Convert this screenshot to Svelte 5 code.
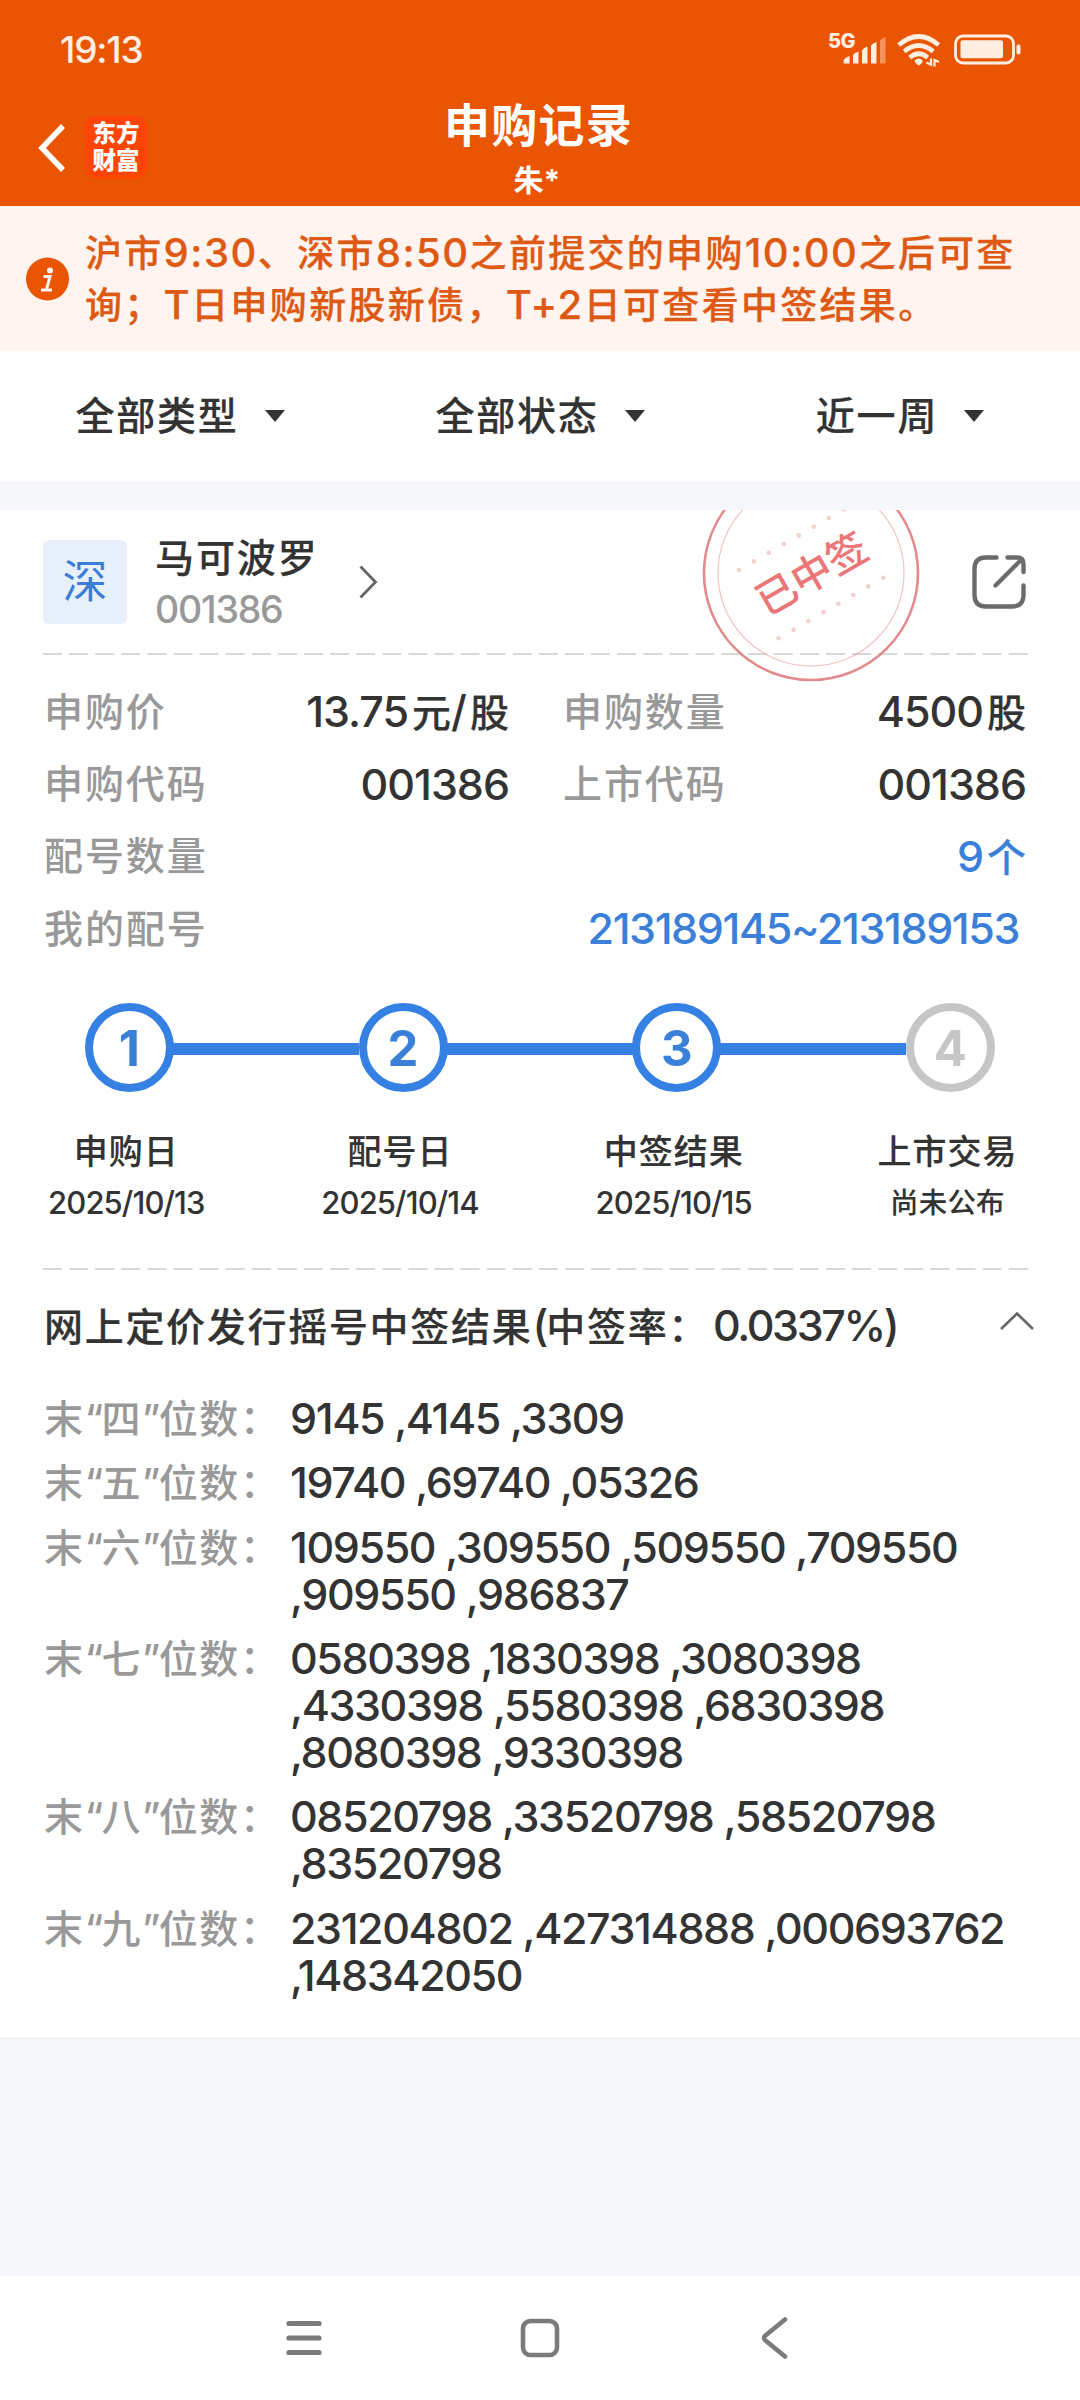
<script>
  const filters = ['全部类型', '全部状态', '近一周'];

  const details = [
    { label: '申购价', value: '13.75元/股' },
    { label: '申购数量', value: '4500股' },
    { label: '申购代码', value: '001386' },
    { label: '上市代码', value: '001386' }
  ];

  const steps = [
    { no: 1, name: '申购日', date: '2025/10/13', done: true },
    { no: 2, name: '配号日', date: '2025/10/14', done: true },
    { no: 3, name: '中签结果', date: '2025/10/15', done: true },
    { no: 4, name: '上市交易', date: '尚未公布', done: false }
  ];

  const results = [
    { digit: '四', lines: ['9145 ,4145 ,3309'] },
    { digit: '五', lines: ['19740 ,69740 ,05326'] },
    { digit: '六', lines: ['109550 ,309550 ,509550 ,709550', ',909550 ,986837'] },
    { digit: '七', lines: ['0580398 ,1830398 ,3080398', ',4330398 ,5580398 ,6830398', ',8080398 ,9330398'] },
    { digit: '八', lines: ['08520798 ,33520798 ,58520798', ',83520798'] },
    { digit: '九', lines: ['231204802 ,427314888 ,000693762', ',148342050'] }
  ];

  const dots = [0, 1, 2, 3, 4, 5, 6, 7];

  // Latin runs are set slightly larger than the Han characters around them.
  const runs = (text) =>
    text.split(/([0-9A-Z:.\/+~%()]+)/).filter(Boolean).map((t) => ({ t, latin: /^[0-9A-Z:.\/+~%()]/.test(t) }));
</script>

{#snippet mixed(text)}{#each runs(text) as r}<span class:latin={r.latin}>{r.t}</span>{/each}{/snippet}

<div class="screen" lang="zh-CN">
  <header>
    <div class="status">
      <span class="time">19:13</span>
      <svg class="status-icons" width="196" height="44" viewBox="0 0 196 44">
        <text class="net" x="0" y="21.300">5G</text>
        <g fill="#ffeee2">
          <path d="M15.700 36.500V33Q17 30.500 21.500 29V36.500Z" />
          <path d="M25 36.500V28Q26.500 25.500 30.500 24.500V36.500Z" />
          <path d="M34 36.500V23.500Q35.500 20.500 39.500 19.500V36.500Z" />
          <path d="M43 36.500V18.500Q44.500 16 48.500 15V36.500Z" />
          <path opacity=".4" d="M52 36.500V13.500Q53.500 11 57.500 10V36.500Z" />
          <path d="M86.700 33.500Q90.700 29.500 94.700 33.500Q95 36 90.700 38.700Q86.500 36 86.700 33.500Z" />
          <rect x="132.500" y="13.300" width="42.500" height="18" rx="2" />
          <rect x="188.500" y="17.500" width="4" height="10" rx="2" />
        </g>
        <g fill="none" stroke="#ffeee2">
          <path stroke-width="4.600" d="M70.700 18Q90.700 1 110.700 18M76.200 24.500Q90.700 12.500 105.200 24.500M81.700 30.500Q90.700 23 99.700 30.500" />
          <path stroke-width="2.200" d="M98.500 35.500L103 37.700V31.500M106.500 39.500V33L111 35" />
          <rect x="127.500" y="9" width="58" height="27" rx="7.500" stroke-width="2.800" />
        </g>
      </svg>
    </div>
    <div class="titlebar">
      <div class="side">
        <svg width="32" height="52" viewBox="0 0 32 52"><path d="M29 4L8 26L29 48" fill="none" stroke="#fff" stroke-width="5.500" /></svg>
        <span class="logo"><span>东方</span><span>财富</span></span>
      </div>
      <div class="heading">
        <h1>申购记录</h1>
        <p>朱*</p>
      </div>
      <div class="side"></div>
    </div>
  </header>

  <div class="notice">
    <svg width="44" height="44" viewBox="0 0 44 44">
      <circle cx="22.500" cy="22" r="21.500" fill="#ea5504" />
      <circle cx="25" cy="13.500" r="3" fill="#fff4ef" />
      <path d="M18.500 19.500H25L21.500 32.500M16 33H27" fill="none" stroke="#fff4ef" stroke-width="3" />
    </svg>
    <div class="notice-text">
      <div>{@render mixed('沪市9:30、深市8:50之前提交的申购10:00之后可查')}</div>
      <div>{@render mixed('询；T日申购新股新债，T+2日可查看中签结果。')}</div>
    </div>
  </div>

  <nav class="filters">
    {#each filters as f}
      <button><span>{f}</span><i></i></button>
    {/each}
  </nav>

  <main>
    <section class="stock">
      <span class="market">深</span>
      <div class="stock-id">
        <strong>马可波罗</strong>
        <span>001386</span>
      </div>
      <svg width="20" height="34" viewBox="0 0 20 34"><path d="M1.500 1.500L16.500 17L1.500 32.500" fill="none" stroke="#666" stroke-width="2.800" /></svg>
      <svg class="share" width="56" height="56" viewBox="0 0 56 56">
        <path d="M25.500 3.500H15Q3.500 3.500 3.500 15V41Q3.500 52.500 15 52.500H41Q52.500 52.500 52.500 41V31.500M36.500 3.500H46Q52.500 3.500 52.500 10V18M51 5L24.500 31.500" fill="none" stroke="#6b6b6b" stroke-width="4.400" stroke-linecap="round" />
      </svg>
      <svg class="stamp" width="220" height="173" viewBox="701 510 220 173">
        <g fill="none" stroke="#e48a8c">
          <circle cx="811" cy="573" r="107" stroke-width="2.600" />
          <circle cx="811" cy="573" r="93" stroke-width="1.200" opacity=".5" />
        </g>
        <g fill="#f3cfcd">
          {#each dots as d}
            <circle cx={739 + d * 14.95} cy={570 - d * 8.65} r="2.300" />
            <circle cx={778.600 + d * 14.95} cy={638.300 - d * 8.65} r="2.300" />
          {/each}
        </g>
        <text class="stamp-text" transform="translate(811.500 573.500) rotate(-30)" x="0" y="15" text-anchor="middle">已中签</text>
      </svg>
    </section>

    <svg class="rule" width="987" height="2"><line x1="0" y1="1" x2="987" y2="1" /></svg>

    <section class="details">
      {#each details as d}
        <div class="pair"><span class="label">{d.label}</span><span class="value">{@render mixed(d.value)}</span></div>
      {/each}
      <div class="pair wide"><span class="label">配号数量</span><span class="value link">{@render mixed('9个')}</span></div>
      <div class="pair wide"><span class="label">我的配号</span><span class="value link range">{@render mixed('213189145~213189153')}</span></div>
    </section>

    <section class="steps">
      {#each steps as s}
        <div class="step" class:pending={!s.done}>
          <div class="track"><span class="node">{s.no}</span></div>
          <div class="step-name">{s.name}</div>
          <div class="step-date" class:han={!s.done}>{s.date}</div>
        </div>
      {/each}
    </section>

    <svg class="rule" width="987" height="2"><line x1="0" y1="1" x2="987" y2="1" /></svg>

    <section class="result-head">
      <h2>{@render mixed('网上定价发行摇号中签结果(中签率：0.0337%)')}</h2>
      <svg width="36" height="20" viewBox="0 0 36 20"><path d="M2 18L18 2.500L34 18" fill="none" stroke="#666" stroke-width="2.600" /></svg>
    </section>

    <section class="results">
      {#each results as r}
        <div class="result">
          <span class="label">末<span class="quote">“</span>{r.digit}<span class="quote">”</span>位数：</span>
          <div class="numbers">{#each r.lines as l}<div>{l}</div>{/each}</div>
        </div>
      {/each}
    </section>
  </main>

  <footer>
    <svg width="40" height="44" viewBox="0 0 40 44"><path d="M5 7.500H35M5 22H35M5 36.500H35" stroke="#7b7b7b" stroke-width="5.200" stroke-linecap="round" /></svg>
    <svg width="44" height="44" viewBox="0 0 44 44"><rect x="6" y="5" width="34" height="34" rx="7.500" fill="none" stroke="#7b7b7b" stroke-width="4.600" /></svg>
    <svg width="40" height="44" viewBox="0 0 40 44"><path d="M31 3.500L11.500 19.500Q8.500 22 11.500 24.500L31 40.500" fill="none" stroke="#7b7b7b" stroke-width="4.600" stroke-linecap="round" /></svg>
  </footer>
</div>

<style>
  :global(body) { margin: 0; background: #f7f8fa; }

  .screen {
    display: flex;
    flex-direction: column;
    width: 1080px;
    height: 2400px;
    overflow: hidden;
    background: #f6f7fa;
    color: #333;
    font-family: Inter, "Noto Sans CJK SC", sans-serif;
    font-weight: 500;
    line-height: 1.2;
    white-space: nowrap;
  }
  svg { display: block; flex: none; }
  h1, h2, p { margin: 0; font-weight: inherit; }

  header { height: 206px; background: #ea5504; color: #fff; }
  .status { display: flex; justify-content: space-between; height: 100px; padding: 0 50px 0 60px; box-sizing: border-box; }
  .time { font-size: 37px; line-height: 100px; letter-spacing: -1.2px; color: #ffeee2; }
  .status-icons { margin: 27px 6px 0 0; }
  .net { font: 800 20px Inter, sans-serif; letter-spacing: -.5px; fill: #ffeee2; }
  .titlebar { display: flex; height: 106px; }
  .side { display: flex; flex: 1; align-items: flex-start; padding-left: 34px; }
  .side:last-child { padding: 0 34px 0 0; }
  .side svg { margin-top: 22px; }
  .logo {
    display: flex; flex-direction: column; justify-content: center; align-items: center;
    width: 62px; height: 62px; margin: 16px 0 0 19px; border-radius: 11px;
    background: #ff4505; font-size: 23.500px; line-height: 27px; font-weight: 900;
  }
  .heading { display: flex; flex-direction: column; align-items: center; }
  h1 { font-size: 46px; line-height: 50px; font-weight: 700; letter-spacing: 1.200px; margin-right: 3px; }
  p { font-size: 30px; line-height: 34px; font-weight: 700; margin: 13px 6px 0 0; }

  .notice { display: flex; align-items: center; height: 145px; padding-left: 25px; background: #fff4ef; color: #de5a14; }
  .notice-text { padding: 1px 0 0 16px; font-size: 37px; line-height: 51px; letter-spacing: 2.300px; -webkit-text-stroke: .25px; }
  .notice-text .latin { font-size: 40px; letter-spacing: 1.500px; }

  .filters { display: grid; grid-template-columns: repeat(3, 1fr); height: 130px; background: #fff; }
  button { display: flex; justify-content: center; align-items: center; border: 0; padding: 0; background: none; font: inherit; color: inherit; font-size: 39px; letter-spacing: 1.800px; -webkit-text-stroke: .2px; }
  i { border: 10px solid transparent; border-top: 12px solid #333; border-bottom: 0; margin-left: 26px; }

  main { position: relative; height: 1529px; margin-top: 29px; background: #fff; border-bottom: 1px solid #eceef1; box-sizing: border-box; flex: none; }
  .stock { display: flex; align-items: center; height: 143px; padding: 0 53px 0 43px; box-sizing: border-box; }
  .market { width: 84px; height: 84px; border-radius: 6px; background: #e8f1fb; color: #3a7ed8; font-size: 45px; line-height: 84px; font-weight: 400; text-align: center; }
  .stock-id { display: flex; flex-direction: column; width: 204px; margin-left: 28px; padding-top: 4px; }
  strong { font-size: 39px; line-height: 51px; letter-spacing: 1.900px; font-weight: 500; -webkit-text-stroke: .2px; }
  .stock-id span { font-size: 37.500px; line-height: 53px; color: #999; letter-spacing: -1.200px; }
  .share { margin-left: auto; }
  .stamp { position: absolute; left: 701px; top: 0; }
  .stamp-text { font-size: 40.500px; font-weight: 500; fill: #ea7678; }
  .rule { margin-left: 43px; }
  .rule line { stroke: #ccc; stroke-width: 1.500; stroke-dasharray: 19 7.100; }

  .label { color: #999; font-size: 39px; letter-spacing: 1.900px; }
  .details { display: grid; grid-template-columns: 465px 463px; column-gap: 54px; grid-auto-rows: 72.300px; padding: 21px 53px 0 44px; }
  .pair { display: flex; justify-content: space-between; align-items: center; }
  .wide { grid-column: 1 / 3; }
  .value { font-size: 39px; }
  .value span:not(.latin) { -webkit-text-stroke: .2px; }
  .value .latin { font-size: 43px; letter-spacing: -1px; }
  .value .latin + span { margin-left: 4px; }
  .link { color: #3a80d9; }
  .range { margin-right: 7px; }
  .range .latin { letter-spacing: -1.400px; }

  .steps { display: grid; grid-template-columns: repeat(4, 273.700px); padding-top: 38px; margin-left: -12px; height: 303px; box-sizing: border-box; }
  .step { text-align: center; }
  .track { display: flex; justify-content: center; position: relative; margin-left: 9px; }
  .step:not(:last-child) .track::after { content: ""; position: absolute; left: 175px; top: 39.500px; width: 187px; height: 12px; background: #3581e3; }
  .node { width: 89px; height: 89px; box-sizing: border-box; border: 8px solid #3581e3; border-radius: 50%; color: #3a80d9; font-size: 49px; line-height: 76px; font-weight: 700; }
  .pending .node { border-color: #c6c6c6; color: #c6c6c6; }
  .step-name { margin: 38px 0 0 3px; font-size: 34px; line-height: 44px; letter-spacing: 1px; -webkit-text-stroke: .15px; }
  .step-date { margin: 5px 0 0 3px; font-size: 31px; line-height: 47px; letter-spacing: -.900px; }
  .han { font-size: 28.500px; letter-spacing: .2px; }

  .result-head { display: flex; justify-content: space-between; align-items: center; height: 112px; padding: 0 45px 0 44px; }
  .result-head svg { margin-bottom: 10px; }
  h2 { font-size: 39px; letter-spacing: 1.700px; }
  h2 span:not(.latin) { -webkit-text-stroke: .2px; }
  h2 .latin { font-size: 43px; letter-spacing: -2px; }
  h2 .latin:last-child { letter-spacing: -2.400px; margin-left: 4px; }
  .results { display: grid; row-gap: 17.300px; padding: 13px 0 0 44px; }
  .result { display: flex; line-height: 47px; }
  .result .label { width: 246px; letter-spacing: 1.700px; }
  .label .quote { letter-spacing: -1.800px; }
  .numbers { font-size: 43px; letter-spacing: -1.400px; }

  footer { display: flex; justify-content: space-between; align-items: center; height: 124px; margin-top: auto; padding: 0 286px 0 284px; background: #fff; }
</style>
